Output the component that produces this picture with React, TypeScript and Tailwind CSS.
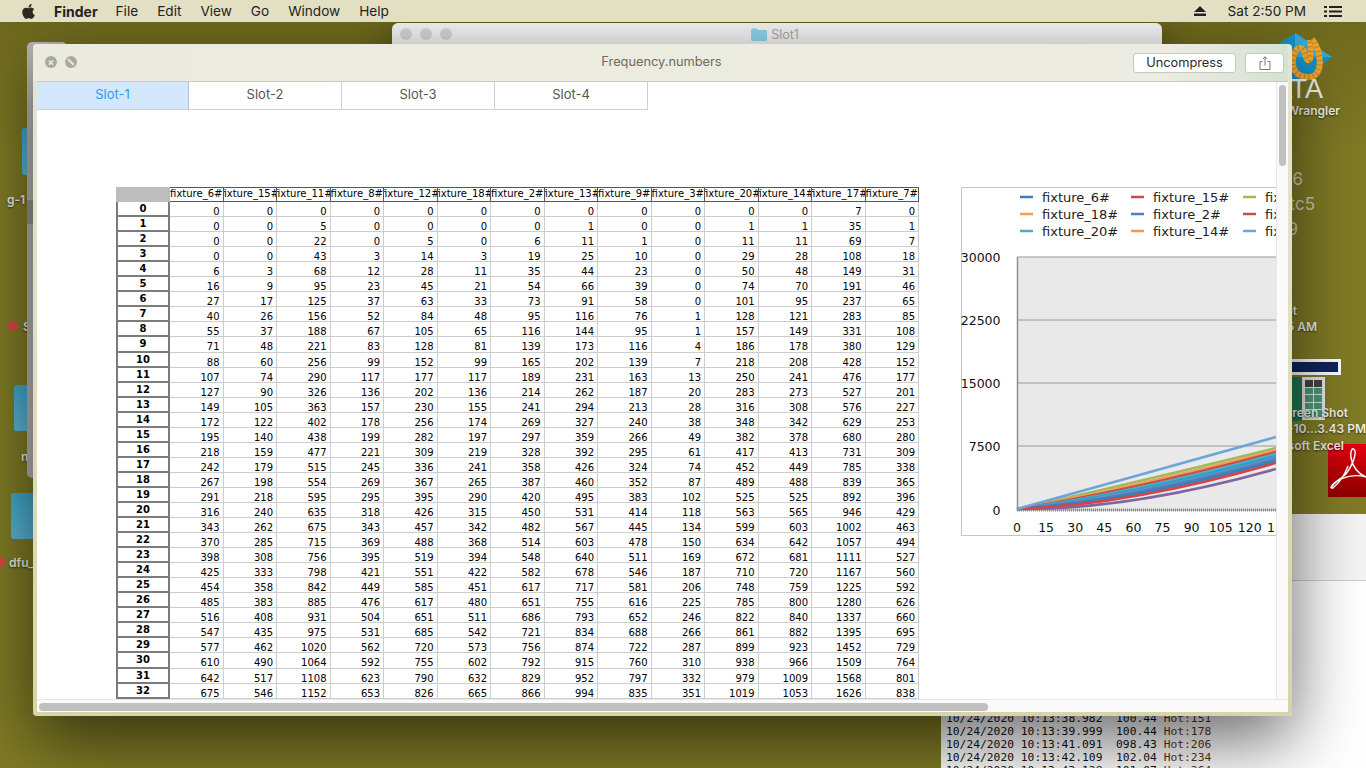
import { FaApple } from "react-icons/fa";

const columns = ["fixture_6#", "fixture_15#", "fixture_11#", "fixture_8#", "fixture_12#", "fixture_18#", "fixture_2#", "fixture_13#", "fixture_9#", "fixture_3#", "fixture_20#", "fixture_14#", "fixture_17#", "fixture_7#"];

const rows = [
  "0 0 0 0 0 0 0 0 0 0 0 0 7 0",
  "0 0 5 0 0 0 0 1 0 0 1 1 35 1",
  "0 0 22 0 5 0 6 11 1 0 11 11 69 7",
  "0 0 43 3 14 3 19 25 10 0 29 28 108 18",
  "6 3 68 12 28 11 35 44 23 0 50 48 149 31",
  "16 9 95 23 45 21 54 66 39 0 74 70 191 46",
  "27 17 125 37 63 33 73 91 58 0 101 95 237 65",
  "40 26 156 52 84 48 95 116 76 1 128 121 283 85",
  "55 37 188 67 105 65 116 144 95 1 157 149 331 108",
  "71 48 221 83 128 81 139 173 116 4 186 178 380 129",
  "88 60 256 99 152 99 165 202 139 7 218 208 428 152",
  "107 74 290 117 177 117 189 231 163 13 250 241 476 177",
  "127 90 326 136 202 136 214 262 187 20 283 273 527 201",
  "149 105 363 157 230 155 241 294 213 28 316 308 576 227",
  "172 122 402 178 256 174 269 327 240 38 348 342 629 253",
  "195 140 438 199 282 197 297 359 266 49 382 378 680 280",
  "218 159 477 221 309 219 328 392 295 61 417 413 731 309",
  "242 179 515 245 336 241 358 426 324 74 452 449 785 338",
  "267 198 554 269 367 265 387 460 352 87 489 488 839 365",
  "291 218 595 295 395 290 420 495 383 102 525 525 892 396",
  "316 240 635 318 426 315 450 531 414 118 563 565 946 429",
  "343 262 675 343 457 342 482 567 445 134 599 603 1002 463",
  "370 285 715 369 488 368 514 603 478 150 634 642 1057 494",
  "398 308 756 395 519 394 548 640 511 169 672 681 1111 527",
  "425 333 798 421 551 422 582 678 546 187 710 720 1167 560",
  "454 358 842 449 585 451 617 717 581 206 748 759 1225 592",
  "485 383 885 476 617 480 651 755 616 225 785 800 1280 626",
  "516 408 931 504 651 511 686 793 652 246 822 840 1337 660",
  "547 435 975 531 685 542 721 834 688 266 861 882 1395 695",
  "577 462 1020 562 720 573 756 874 722 287 899 923 1452 729",
  "610 490 1064 592 755 602 792 915 760 310 938 966 1509 764",
  "642 517 1108 623 790 632 829 952 797 332 979 1009 1568 801",
  "675 546 1152 653 826 665 866 994 835 351 1019 1053 1626 838",
];

const legend = [
  { name: "fixture_6#", color: "#3a7fbd", x: 1020, y: 197 },
  { name: "fixture_15#", color: "#d0464a", x: 1131, y: 197 },
  { name: "fixture_11#", color: "#9bbb59", x: 1243, y: 197 },
  { name: "fixture_18#", color: "#f59d56", x: 1020, y: 214 },
  { name: "fixture_2#", color: "#4f81bd", x: 1131, y: 214 },
  { name: "fixture_12#", color: "#c0504d", x: 1243, y: 214 },
  { name: "fixture_20#", color: "#4bacc6", x: 1020, y: 231 },
  { name: "fixture_14#", color: "#f79646", x: 1131, y: 231 },
  { name: "fixture_17#", color: "#6ea5d8", x: 1243, y: 231 },
];

const curves = [
  { color: "#8064a2", c: 510, end: 469 },
  { color: "#9bbb59", c: 484, end: 448 },
  { color: "#f59d56", c: 488, end: 450 },
  { color: "#c0504d", c: 491, end: 452 },
  { color: "#4bacc6", c: 494, end: 454 },
  { color: "#2f9ec4", c: 496, end: 456 },
  { color: "#6a93c4", c: 498, end: 458 },
  { color: "#4f81bd", c: 500, end: 459 },
  { color: "#3a7fbd", c: 502, end: 461 },
  { color: "#d0464a", c: 505, end: 463 },
  { color: "#6ea5d8", c: 478, end: 437 },
];

const yAxis = [
  { label: "30000", y: 257 },
  { label: "22500", y: 320 },
  { label: "15000", y: 383 },
  { label: "7500", y: 446 },
  { label: "0", y: 510 },
];

const xAxis = [0, 15, 30, 45, 60, 75, 90, 105, 120, 135];

const logLines = [
  ["10/24/2020 10:13:38.982  100.44 ", "Hot:151"],
  ["10/24/2020 10:13:39.999  100.44 ", "Hot:178"],
  ["10/24/2020 10:13:41.091  098.43 ", "Hot:206"],
  ["10/24/2020 10:13:42.109  102.04 ", "Hot:234"],
  ["10/24/2020 10:13:43.128  101.07 ", "Hot:264"],
];

function Chart() {
  return (
    <svg width="315" height="349" viewBox="961 187 315 349" className="shrink-0 font-['DejaVu_Sans',sans-serif]">
      <rect x="961.5" y="187.5" width="330" height="348" fill="#fff" stroke="#c4c4c4" />
      {legend.map((l) => (
        <g key={l.name}>
          <line x1={l.x} x2={l.x + 13} y1={l.y} y2={l.y} stroke={l.color} strokeWidth="2.5" />
          <text x={l.x + 22} y={l.y + 5} fontSize="13" fill="#222">{l.name}</text>
        </g>
      ))}
      <rect x="1017" y="257" width="260" height="253" fill="#e9e9e9" />
      {yAxis.map((t) => (
        <g key={t.label}>
          <line x1="1017" x2="1276" y1={t.y} y2={t.y} stroke="#9a9a9a" />
          <text x="1000.5" y={t.y + 5} textAnchor="end" fontSize="12.5" fill="#111">{t.label}</text>
        </g>
      ))}
      <line x1="1017.5" x2="1017.5" y1="257" y2="511" stroke="#8f8f8f" strokeWidth="1.5" />
      <line x1="1017" x2="1276" y1="510" y2="510" stroke="#8c8c8c" strokeWidth="3" strokeDasharray="1 1" />
      {curves.map((c) => (
        <path key={c.color} d={`M1017 509 Q1130 ${c.c} 1276 ${c.end}`} fill="none" stroke={c.color} strokeWidth="2.5" />
      ))}
      {xAxis.map((v, i) => (
        <text key={v} x={1017 + i * 29.1} y="532" textAnchor="middle" fontSize="12.5" fill="#111">{v}</text>
      ))}
    </svg>
  );
}

function DataTable() {
  return (
    <div className="grid shrink-0 grid-cols-[54px_repeat(14,53.5px)] auto-rows-[15.06px] font-['DejaVu_Sans',sans-serif] text-[10px] text-black">
      <div className="bg-[#bdbdbd]" />
      {columns.map((c) => (
        <div key={c} className="flex justify-center overflow-hidden whitespace-nowrap border-y border-r border-[#555] leading-[12px]">
          {c}
        </div>
      ))}
      {rows.map((row, i) => (
        <div key={i} className="contents">
          <div className="border-x-2 border-b-2 border-[#7c7c7c] text-center font-bold leading-[13px]">{i}</div>
          {row.split(" ").map((v, j) => (
            <div key={j} className="border-r border-b border-[#cdcdcd] pr-[3px] text-right leading-[19px]">{v}</div>
          ))}
        </div>
      ))}
    </div>
  );
}

function DesktopLabel({ className, children }: { className: string; children: string }) {
  return (
    <span className={`absolute whitespace-nowrap font-['Inter',sans-serif] text-[12px] font-semibold text-[#f0f0e8] [text-shadow:0_1px_2px_rgba(0,0,0,0.6)] ${className}`}>
      {children}
    </span>
  );
}

function Folder({ className }: { className: string }) {
  return <div className={`absolute rounded-[3px] bg-gradient-to-b from-[#3fa9cf] to-[#5cb9d8] ${className}`} />;
}

function Desktop() {
  return (
    <>
      {/* left side icons, mostly under the window */}
      <Folder className="left-[22px] top-[128px] h-[47px] w-[30px]" />
      <DesktopLabel className="left-[7px] top-[191px]">g-1</DesktopLabel>
      <div className="absolute left-[8px] top-[321px] h-[10px] w-[10px] rounded-full bg-[#e04848]" />
      <DesktopLabel className="left-[23px] top-[318px]">S</DesktopLabel>
      <Folder className="left-[14px] top-[385px] h-[46px] w-[40px]" />
      <DesktopLabel className="left-[21px] top-[448px]">n</DesktopLabel>
      <Folder className="left-[11px] top-[493px] h-[46px] w-[40px]" />
      <div className="absolute left-[-5px] top-[557px] h-[10px] w-[10px] rounded-full bg-[#e04848]" />
      <DesktopLabel className="left-[9px] top-[554px]">dfu_</DesktopLabel>

      {/* right side icons */}
      <svg className="absolute left-[1256px] top-[30px]" width="80" height="60" viewBox="0 0 80 60">
        <polygon points="39,3 76,27 42,55 2,27" fill="#1592c6" />
        <polygon points="39,3 76,27 39,27" fill="#35acd8" />
        <path d="M56 9 C66 22 68 48 52 47 C40 47 34 38 38 24 C41 16 47 16 49 24 C51 34 57 34 54 10" fill="none" stroke="#f2aa35" strokeWidth="6" />
        <path d="M56 9 C66 22 68 48 52 47 C40 47 34 38 38 24 C41 16 47 16 49 24 C51 34 57 34 54 10" fill="none" stroke="#c9801c" strokeWidth="6" strokeDasharray="1 3.5" />
      </svg>
      <span className="absolute right-[43px] top-[74px] font-['Liberation_Sans',sans-serif] text-[27px] leading-[30px] text-[#f4f4f0]">DATA</span>
      <DesktopLabel className="right-[26px] top-[102px]">Data Wrangler</DesktopLabel>
      <span className="absolute right-[63px] top-[167px] font-['Inter',sans-serif] text-[17px] leading-[24px] text-[#d2d0b4]">16</span>
      <span className="absolute right-[51px] top-[192px] font-['Inter',sans-serif] text-[17px] leading-[24px] text-[#d2d0b4]">5dtc5</span>
      <span className="absolute right-[68px] top-[217px] font-['Inter',sans-serif] text-[17px] leading-[24px] text-[#d2d0b4]">19</span>
      <DesktopLabel className="right-[69px] top-[302px]">Shot</DesktopLabel>
      <DesktopLabel className="right-[49px] top-[318px]">10:55 AM</DesktopLabel>
      <div className="absolute left-[1270px] top-[359px] flex h-[16px] w-[71px] items-center border-[3px] border-white bg-[#10255c]" />
      <div className="absolute left-[1280px] top-[377px] h-[44px] w-[22px] bg-[#1f7a55]" />
      <div className="absolute left-[1302px] top-[377px] grid h-[43px] w-[23px] grid-cols-2 gap-[1px] bg-[#e8e8e4] p-[3px]">
        {["#444", "#444", "#4c9a78", "#4c9a78", "#4c9a78", "#4c9a78", "#4c9a78", "#4c9a78", "#4c9a78", "#4c9a78"].map((c, i) => (
          <div key={i} className={c === "#444" ? "bg-[#444]" : "bg-[#4c9a78]"} />
        ))}
      </div>
      <div className="absolute left-[1328px] top-[444px] h-[53px] w-[40px] bg-gradient-to-b from-[#e60012] to-[#8f0000]">
        <svg width="38" height="53" viewBox="0 0 38 53">
          <path d="M3 44 C2 40 12 36 18 30 C24 22 28 12 27 7 C25 2 22 6 23 14 C25 24 31 30 38 33 M38 33 C28 30 14 32 6 40 C3 43 3 46 6 43 C12 38 17 30 20 22" fill="none" stroke="#fff" strokeWidth="1.4" />
        </svg>
      </div>
      <DesktopLabel className="right-[18px] top-[404px]">Screen Shot</DesktopLabel>
      <DesktopLabel className="right-0 top-[420px]">2020-10...3.43 PM</DesktopLabel>
      <DesktopLabel className="right-[22px] top-[437px]">Microsoft Excel</DesktopLabel>
    </>
  );
}

function BackgroundWindows() {
  return (
    <>
      {/* Slot1 finder window */}
      <div className="absolute left-[392px] top-[23px] flex h-[60px] w-[770px] items-start justify-center rounded-t-[6px] bg-gradient-to-b from-[#f6f6f6] to-[#e8e8e8] pr-[4px] pt-[4px] shadow-[0_10px_40px_rgba(0,0,0,0.45)]">
        <div className="absolute left-[8px] top-[5px] flex gap-[8px]">
          <span className="h-[12px] w-[12px] rounded-full bg-[#d6d6d4]" />
          <span className="h-[12px] w-[12px] rounded-full bg-[#d6d6d4]" />
          <span className="h-[12px] w-[12px] rounded-full bg-[#d6d6d4]" />
        </div>
        <div className="flex items-center gap-[4px] font-['Inter',sans-serif] text-[12.5px] leading-[15px] text-[#a8a8a8]">
          <svg width="16" height="13" viewBox="0 0 16 13">
            <path d="M0 2 Q0 0.5 1.5 0.5 H5.5 L7 2 H14.5 Q16 2 16 3.5 V11.5 Q16 13 14.5 13 H1.5 Q0 13 0 11.5Z" fill="#8ed3f0" />
          </svg>
          Slot1
        </div>
      </div>

      {/* window behind, with the log text */}
      <div className="absolute left-[941px] top-[514px] h-[254px] w-[425px] bg-white">
        <div className="h-[67px] border-b border-[#cfcfcf] bg-[#f4f4f4]" />
        <div className="absolute left-[5px] top-[199px] whitespace-pre font-['DejaVu_Sans_Mono',monospace] text-[11.3px] leading-[12.9px] text-[#111]">
          {logLines.map((l) => (
            <div key={l[0]}>
              {l[0]}
              <span className="text-[#5b3210]">{l[1]}</span>
            </div>
          ))}
        </div>
      </div>

      {/* sheet under the front window */}
      <div className="absolute left-[27px] top-[42px] h-[436px] w-[40px] rounded-[5px] bg-[#b8b8b6]">
        <div className="mt-[158px] h-[24px] bg-[#999997]" />
      </div>
    </>
  );
}

function MainWindow() {
  return (
    <div className="absolute left-[33px] top-[44px] flex h-[672px] w-[1259px] flex-col rounded-[4px] bg-gradient-to-b from-[#e6e5d4] to-[#d6d4a8] pb-[4px] pr-[4px] shadow-[0_24px_70px_rgba(0,0,0,0.6)]">
      <div className="relative flex h-[37px] shrink-0 items-center justify-center rounded-t-[4px] bg-gradient-to-r from-[#ebeadf] via-[#edece2] via-90% to-[#d4e2d2] pb-[2px] pl-[2px] font-['Inter',sans-serif] text-[12.8px] text-[#6e6a62]">
        <div className="absolute left-[12px] top-[12px] flex gap-[8px]">
          <span className="flex h-[12px] w-[12px] items-center justify-center rounded-full bg-[#a9a9a3] text-[10px] font-bold leading-none text-[#ecebe0]">×</span>
          <span className="flex h-[12px] w-[12px] items-center justify-center rounded-full bg-[#a9a9a3]">
            <span className="block h-[1.5px] w-[8px] rotate-45 bg-[#ecebe0]" />
          </span>
        </div>
        Frequency.numbers
        <div className="absolute right-[4px] top-[9px] flex gap-[9px]">
          <button type="button" className="h-[20px] w-[103px] rounded-[3px] border border-[#c8c8bc] bg-white pb-[2px] text-[12.8px] leading-[15px] text-[#2a2a2a]">
            Uncompress
          </button>
          <button type="button" aria-label="Share" className="flex h-[20px] w-[39px] items-center justify-center rounded-[3px] border border-[#c8c8bc] bg-white">
            <svg width="12" height="14" viewBox="0 0 12 14" fill="none" stroke="#777" strokeWidth="1">
              <path d="M3.5 5.5 H1 V13.5 H11 V5.5 H8.5 M6 9.5 V0.8 M3.8 3 L6 0.8 L8.2 3" />
            </svg>
          </button>
        </div>
      </div>
      <div className="flex min-h-0 flex-1 pl-[4px]">
        <div className="flex min-w-0 flex-1 flex-col border-t border-[#c9c9c0] bg-white">
          <div className="flex min-h-0 flex-1">
            <div className="min-w-0 flex-1 overflow-hidden">
              <div className="flex h-[28px] w-[611px] border-b border-[#cfcfcf] font-['Inter',sans-serif] text-[13px] leading-[24px] text-[#555]">
                <div className="w-[152px] border-r border-[#b0c4da] bg-[#d3e8fc] text-center text-[#2b9bf4]">Slot-1</div>
                <div className="w-[153px] border-r border-[#cfcfcf] text-center">Slot-2</div>
                <div className="w-[153px] border-r border-[#cfcfcf] text-center">Slot-3</div>
                <div className="w-[153px] border-r border-[#cfcfcf] text-center">Slot-4</div>
              </div>
              <div className="flex gap-[42px] pl-[79px] pt-[77px]">
                <DataTable />
                <Chart />
              </div>
            </div>
            <div className="w-[12px] shrink-0 border-l border-[#e8e8e8] bg-[#fafafa] px-[2px] pt-[3px]">
              <div className="h-[81px] rounded-full bg-[#c0c0c0]" />
            </div>
          </div>
          <div className="h-[13px] shrink-0 border-t border-[#e8e8e8] bg-[#fafafa] pl-[2px] pt-[3px]">
            <div className="h-[8px] w-[949px] rounded-full bg-[#c0c0c0]" />
          </div>
        </div>
      </div>
    </div>
  );
}

function MenuBar() {
  return (
    <div className="absolute inset-x-0 top-0 flex h-[22px] items-center bg-[#e2dfc2] font-['Inter',sans-serif] text-[13.6px] text-[#222]">
      <FaApple className="ml-[20px] mr-[17px] text-[#2a2a22]" size={17} />
      <span className="text-[14px] font-bold">Finder</span>
      <span className="ml-[18px]">File</span>
      <span className="ml-[19px]">Edit</span>
      <span className="ml-[19px]">View</span>
      <span className="ml-[19px]">Go</span>
      <span className="ml-[19px]">Window</span>
      <span className="ml-[19px]">Help</span>
      <svg className="ml-auto" width="12" height="10" viewBox="0 0 12 10" fill="#222">
        <path d="M6 0 L12 6 H0Z M0 7.5 H12 V10 H0Z" />
      </svg>
      <span className="ml-[22px]">Sat 2:50 PM</span>
      <svg className="ml-[18px] mr-[24px]" width="18" height="11" viewBox="0 0 18 11" fill="#222">
        <path d="M0 0 H3 V2 H0Z M5 0 H18 V2 H5Z M0 4.5 H3 V6.5 H0Z M5 4.5 H18 V6.5 H5Z M0 9 H3 V11 H0Z M5 9 H18 V11 H5Z" />
      </svg>
    </div>
  );
}

export default function App() {
  return (
    <div className="relative h-[768px] w-[1366px] overflow-hidden bg-gradient-to-b from-[#6c671c] to-[#817c25] to-20%">
      <Desktop />
      <BackgroundWindows />
      <MainWindow />
      <MenuBar />
    </div>
  );
}
